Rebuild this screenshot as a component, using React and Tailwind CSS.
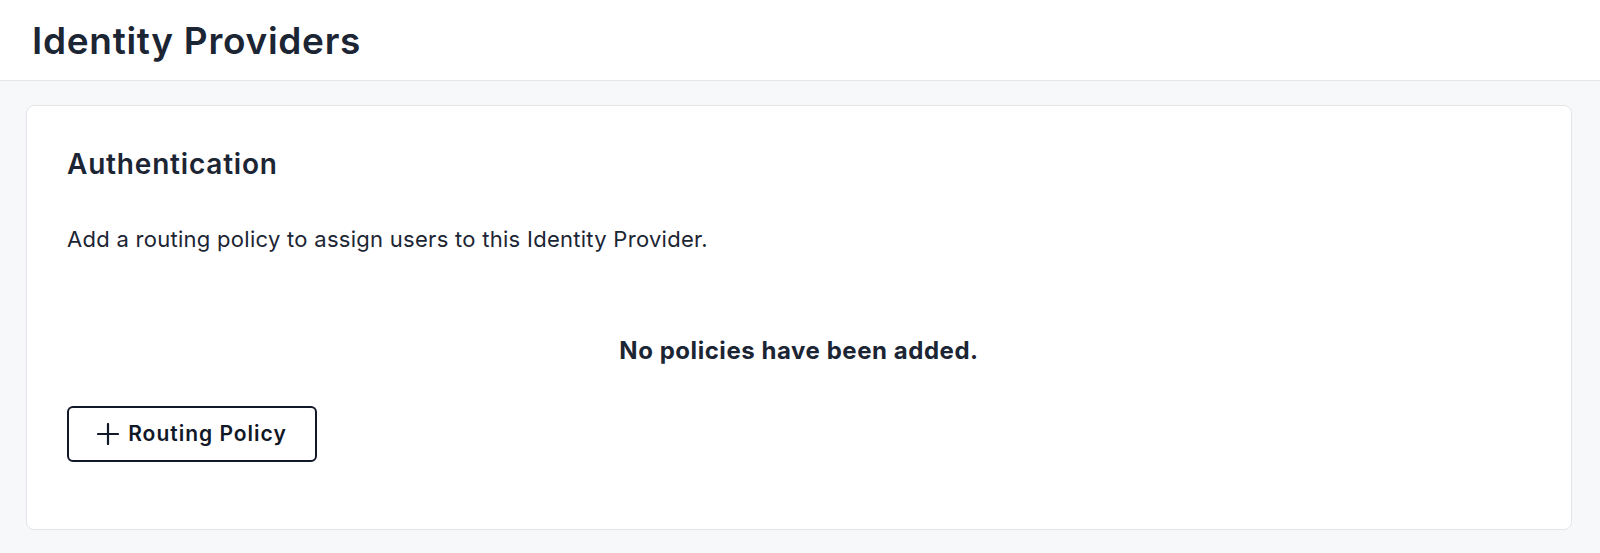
import React from 'react';

function PlusIcon() {
  return (
    <svg width="22" height="22" viewBox="0 0 22 22" fill="none" stroke="currentColor" strokeWidth="2.2" strokeLinecap="round">
      <path d="M11 1v20M1 11h20" />
    </svg>
  );
}

export default function App() {
  return (
    <div className="min-h-screen bg-[#f7f8fa] font-['Inter',sans-serif] text-[#1c2533]">
      <header className="h-[81px] bg-white border-b border-[#e3e5e8] pl-[32px] pt-[19px]">
        <h1 className="text-[37px] leading-[44px] font-semibold tracking-[0.7px]">Identity Providers</h1>
      </header>

      <main className="pt-[24px] pl-[26px] pr-[28px] pb-[23px]">
        <section className="bg-white border border-[#e3e5e8] rounded-lg pl-[40px] pr-[40px] pt-[41px] pb-[67px]">
          <h2 className="text-[28px] leading-[34px] font-semibold tracking-[0.8px]">Authentication</h2>
          <p className="mt-[43px] text-[22px] leading-[31px] font-normal tracking-[0.28px]">
            Add a routing policy to assign users to this Identity Provider.
          </p>

          <div className="mt-[80px] text-center text-[24px] leading-[32px] font-bold tracking-[0.55px]">
            No policies have been added.
          </div>

          <button className="mt-[39px] h-[56px] w-[250px] flex items-center justify-center gap-[9px] border-2 border-[#111827] rounded-md bg-white text-[#111827]">
            <PlusIcon />
            <span className="text-[21px] font-semibold tracking-[1px]">Routing Policy</span>
          </button>
        </section>
      </main>
    </div>
  );
}
